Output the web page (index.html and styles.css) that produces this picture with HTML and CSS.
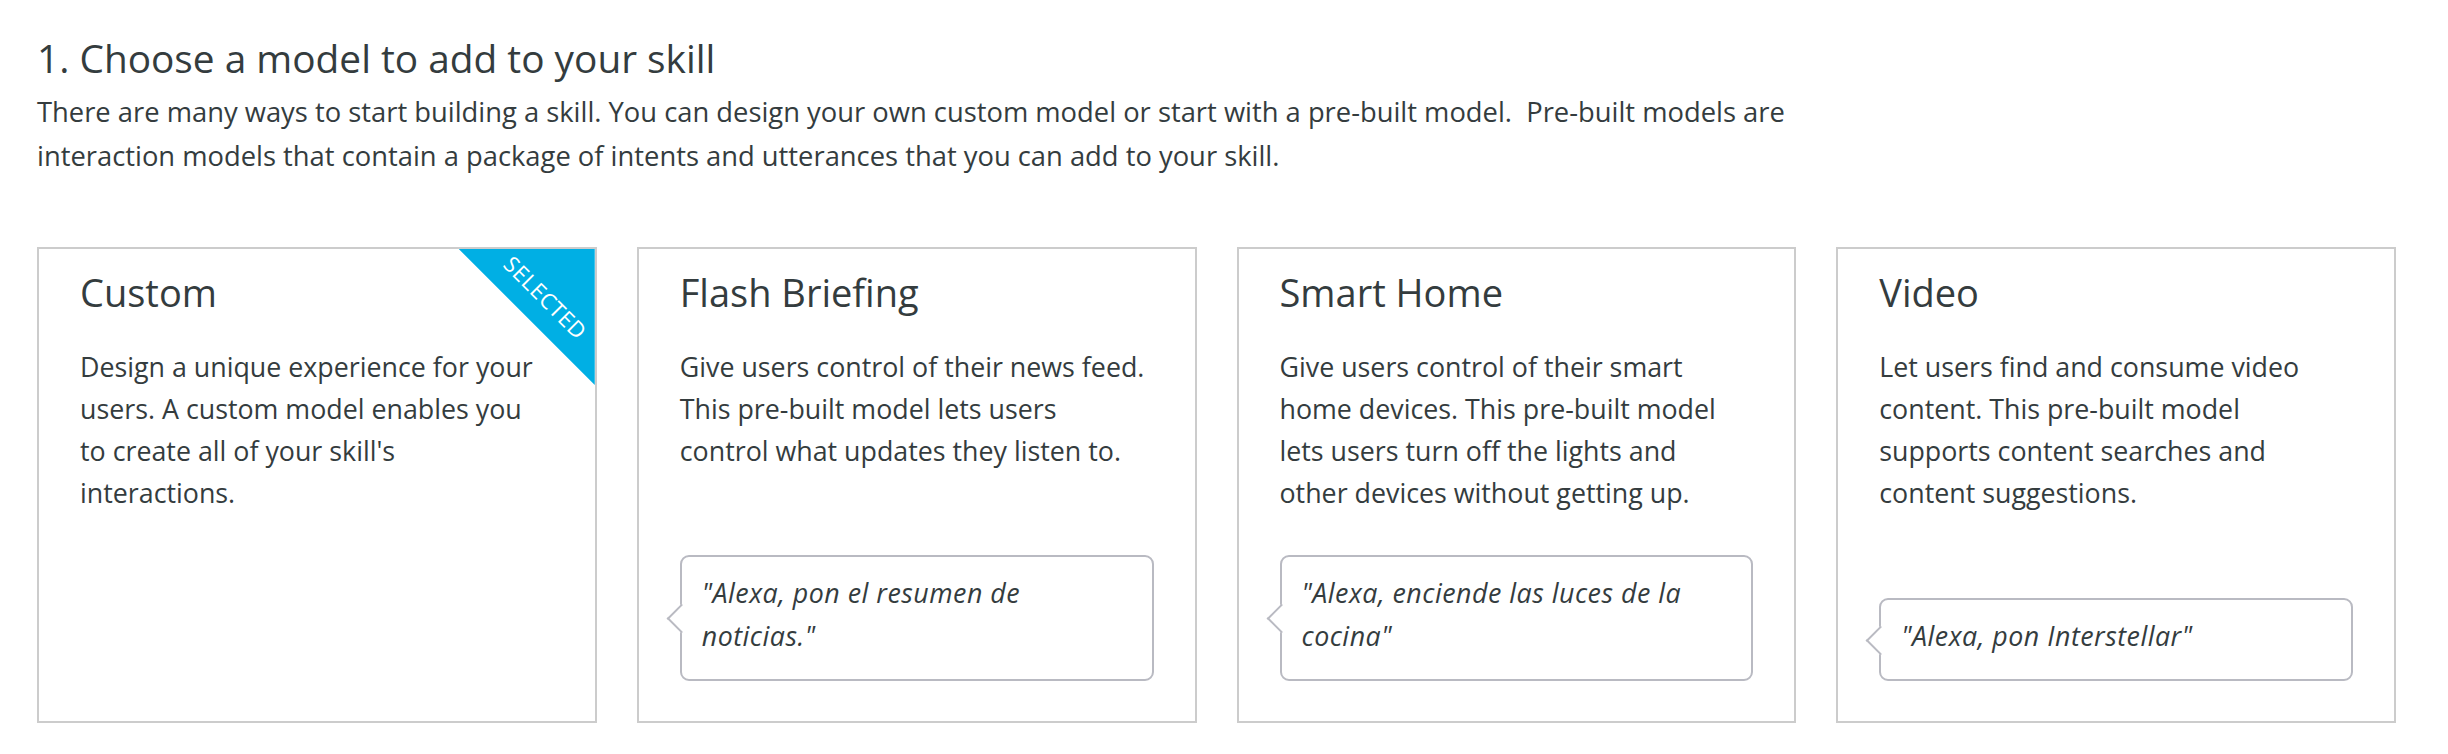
FILE: index.html
```html
<!DOCTYPE html>
<html lang="en">
<head>
<meta charset="utf-8">
<title>Choose a model</title>
<link rel="stylesheet" href="styles.css">
</head>
<body>
<main class="page">
  <h1 class="page-title">1. Choose a model to add to your skill</h1>
  <p class="page-desc">There are many ways to start building a skill. You can design your own custom model or start with a pre-built model.&nbsp; Pre-built models are interaction models that contain a package of intents and utterances that you can add to your skill.</p>

  <div class="cards">
    <section class="card is-selected">
      <div class="ribbon"><span>SELECTED</span></div>
      <h2 class="card-title">Custom</h2>
      <p class="card-desc">Design a unique experience for your users. A custom model enables you to create all of your skill's interactions.</p>
    </section>

    <section class="card">
      <h2 class="card-title">Flash Briefing</h2>
      <p class="card-desc">Give users control of their news feed. This pre-built model lets users control what updates they listen to.</p>
      <div class="bubble">"Alexa, pon el resumen de noticias."</div>
    </section>

    <section class="card">
      <h2 class="card-title">Smart Home</h2>
      <p class="card-desc">Give users control of their smart home devices. This pre-built model lets users turn off the lights and other devices without getting up.</p>
      <div class="bubble">"Alexa, enciende las luces de la cocina"</div>
    </section>

    <section class="card">
      <h2 class="card-title">Video</h2>
      <p class="card-desc">Let users find and consume video content. This pre-built model supports content searches and content suggestions.</p>
      <div class="bubble">"Alexa, pon Interstellar"</div>
    </section>
  </div>
</main>
</body>
</html>
```

FILE: styles.css
```css
* { box-sizing: border-box; }

html, body {
  margin: 0;
  padding: 0;
  background: #ffffff;
}

body {
  font-family: "Open Sans", "Noto Sans", Arial, sans-serif;
  color: #343c3e;
}

.page {
  padding: 35px 52px 0 37px;
}

.page-title {
  margin: 0;
  font-size: 38.8px;
  line-height: 46px;
  font-weight: 400;
}

.page-desc {
  margin: 9px 0 0 0;
  max-width: 1820px;
  font-size: 27.35px;
  line-height: 44px;
}

.cards {
  display: flex;
  gap: 40px;
  margin-top: 69px;
  width: 2359px;
}

.card {
  position: relative;
  flex: 1 1 0;
  display: flex;
  flex-direction: column;
  border: 2px solid #cccccc;
  padding: 20px 41px 40px 41px;
  background: #fff;
  min-height: 476px;
}

.card-title {
  margin: 0;
  font-size: 38px;
  line-height: 46px;
  font-weight: 400;
}

.card-desc {
  margin: 31px 0 41px 0;
  padding-right: 4px;
  font-size: 26.8px;
  line-height: 42px;
}

.bubble {
  position: relative;
  margin-top: auto;
  border: 2px solid #b9bac2;
  border-radius: 9px;
  padding: 14px 30px 22px 20px;
  font-size: 26.8px;
  line-height: 43px;
  font-style: italic;
  letter-spacing: 0.5px;
  background: #fff;
}

.bubble::before {
  content: "";
  position: absolute;
  left: -11px;
  top: 50%;
  width: 19px;
  height: 19px;
  margin-top: -10px;
  background: #fff;
  border-left: 2px solid #b9bac2;
  border-bottom: 2px solid #b9bac2;
  transform: rotate(45deg);
}

.ribbon {
  position: absolute;
  top: 0;
  right: 0;
  width: 136px;
  height: 136px;
  background: #00afe4;
  clip-path: polygon(0 0, 100% 0, 100% 100%);
}

.ribbon span {
  position: absolute;
  left: 87px;
  top: 48px;
  transform: translate(-50%, -50%) rotate(45deg);
  white-space: nowrap;
  color: #ffffff;
  font-size: 22px;
  line-height: 22px;
  letter-spacing: 0.5px;
}
```
